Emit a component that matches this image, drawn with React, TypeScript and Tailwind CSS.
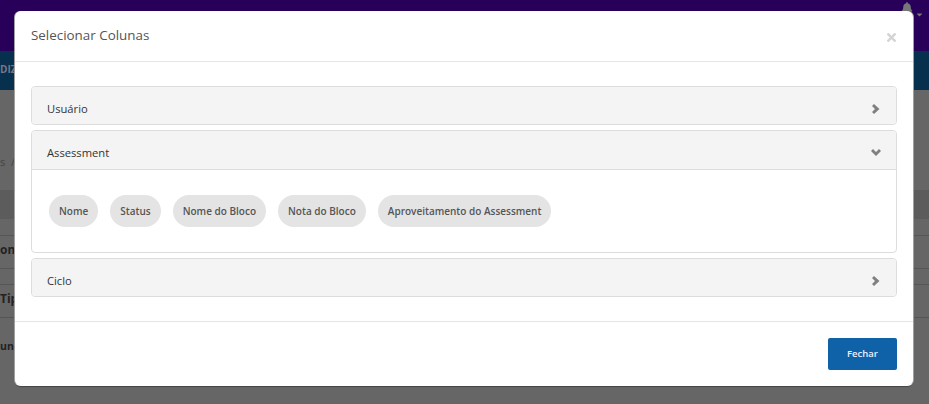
import { FaBell, FaCaretDown } from "react-icons/fa";

const pills = ["Nome", "Status", "Nome do Bloco", "Nota do Bloco", "Aproveitamento do Assessment"];

function PanelHeader({ title, open }: { title: string; open?: boolean }) {
  return (
    <div className={`flex items-center justify-between bg-[#f4f4f4] pl-[15px] text-[11.2px] text-[#333] ${open ? "h-[39px] border-b border-[#ddd] pr-[15px]" : "h-[37px] pr-[16px]"}`}>
      <span className="pt-[7px]">{title}</span>
      {open ? (
        <svg width="10" height="7" viewBox="0 0 10 7" className="mt-[5px] fill-[#808080]">
          <polygon points="0,2 2,0 5,3 8,0 10,2 5,7" />
        </svg>
      ) : (
        <svg width="8" height="10" viewBox="0 0 8 10" className="mt-[7px] fill-[#808080]">
          <polygon points="2,0 7.5,5 2,10 0,8 3,5 0,2" />
        </svg>
      )}
    </div>
  );
}

export default function App() {
  return (
    <div className="relative h-[404px] w-[929px] overflow-hidden bg-[#666] font-['Open_Sans',sans-serif]">
      {/* Page behind the backdrop */}
      <header className="flex h-[51px] justify-end gap-[2px] bg-[#28005a] pr-[5px] pt-[2px] text-[#777]">
        <FaBell size={12} />
        <FaCaretDown size={9} className="mt-[8px]" />
      </header>
      <nav className="h-[39px] bg-[#06304e] text-[10px] font-bold leading-[36px] text-[#778]">DIZ</nav>
      <div className="h-[100px] whitespace-pre pt-[64px] text-[11px] leading-[15px] text-[#444]">s  /</div>
      <div className="h-[29px] bg-[#5c5c5c]" />
      <div className="h-[16px]" />
      <div className="h-[33px] border-t border-[#555] pt-[6px] text-[12px] font-bold leading-[15px] text-[#222]">om</div>
      <div className="h-[16px] border-t border-[#555]" />
      <div className="h-[33px] border-t border-[#555] pt-[6px] text-[12px] font-bold leading-[15px] text-[#222]">Tip</div>
      <div className="border-t border-[#555] pt-[21px] text-[10.5px] font-bold leading-[15px] text-[#222]">una</div>

      {/* Modal */}
      <div className="absolute left-[15px] top-[11px] flex h-[375px] w-[898px] flex-col rounded-[6px] bg-white shadow-[1px_0_0_#a0a0a0,-1px_0_0_#a0a0a0,0_1px_1px_#444]">
        <div className="flex h-[51px] items-center justify-between border-b border-[#e5e5e5] pl-[16px] pr-[17px]">
          <h4 className="mb-[2px] text-[13.4px] font-normal text-[#555]">Selecionar Colunas</h4>
          <svg width="9" height="9" viewBox="0 0 9 9" className="mt-[2px] stroke-[#d4d4d4]" strokeWidth="2.4">
            <line x1="0.5" y1="0.5" x2="8.5" y2="8.5" />
            <line x1="8.5" y1="0.5" x2="0.5" y2="8.5" />
          </svg>
        </div>
        <div className="flex flex-1 flex-col gap-[5px] px-[16px] pt-[24px]">
          <div className="overflow-hidden rounded-[4px] border border-[#ddd]">
            <PanelHeader title="Usuário" />
          </div>
          <div className="overflow-hidden rounded-[4px] border border-[#ddd]">
            <PanelHeader title="Assessment" open />
            <div className="flex h-[82px] gap-[12px] pl-[17px] pt-[25px]">
              {pills.map((p) => (
                <span key={p} className="flex h-[32px] items-center rounded-full bg-[#e4e4e4] px-[10px] text-[10px] font-semibold text-[#555]">
                  {p}
                </span>
              ))}
            </div>
          </div>
          <div className="overflow-hidden rounded-[4px] border border-[#ddd]">
            <PanelHeader title="Ciclo" />
          </div>
        </div>
        <div className="flex h-[65px] justify-end border-t border-[#e5e5e5] pr-[16px] pt-[16px]">
          <button className="h-[32px] w-[69px] rounded-[2px] bg-[#0f62a8] text-[9.5px] font-semibold text-[#eef]">Fechar</button>
        </div>
      </div>
    </div>
  );
}
